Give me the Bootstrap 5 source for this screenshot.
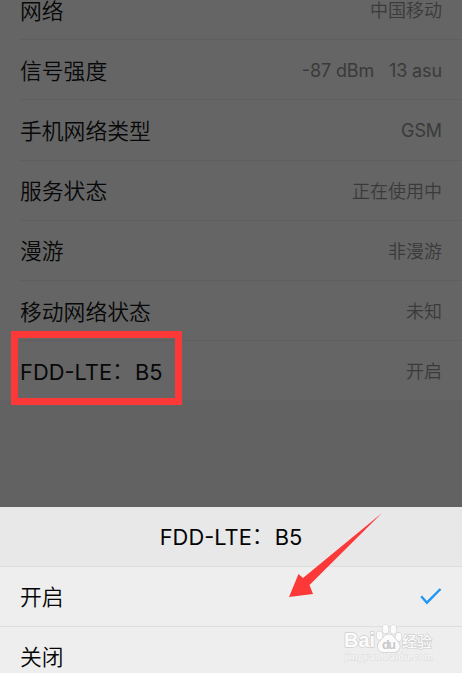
<!DOCTYPE html>
<html lang="zh-CN">
<head>
<meta charset="utf-8">
<meta name="viewport" content="width=device-width, initial-scale=1">
<title>FDD-LTE：B5</title>
<link href="https://cdn.jsdelivr.net/npm/bootstrap@5.3.0/dist/css/bootstrap.min.css" rel="stylesheet">
<style>
html, body { height: 100%; overflow: hidden; }
body { background: #626262; color: #080808; font-family: Inter, "Noto Sans CJK SC", sans-serif; font-weight: 350; font-size: 21.8px; line-height: 30px; }
.screen { height: 673px; }
.settings { height: 507px; overflow: hidden; }
.settings-list { margin-top: -21px; background: #656565; padding-left: 20px; }
.setting { height: 60.2px; padding: 2px 20px 0 0; }
.setting:first-child { padding-top: 3px; }
.setting + .setting { border-top: 1px solid #5f5f5f; }
.value { font-size: 18px; color: #3a3a3a; white-space: pre; padding-top: 1px; font-feature-settings: "case"; }
.value-latin { font-weight: 400; letter-spacing: -.12px; padding-top: 0; }
.sheet { background: #eee; height: 166px; color: #040404; overflow: hidden; }
.sheet-head { height: 60px; padding-top: 1px; background: #e8e8e8; border-bottom: 1px solid #dedede; }
.option { height: 60px; padding: 0 20px; border-bottom: 1px solid #dedede; }
.latin { font-weight: 400; letter-spacing: .05px; font-feature-settings: "case"; }
.colon { font-weight: 350; line-height: 1; vertical-align: 2px; margin-right: 1px; }
.highlight { left: 11px; top: 331px; width: 171px; height: 74px; border: 7px solid #fc3838; }
.pointer { left: 288px; top: 512px; }
.watermark { left: 340px; top: 614px; }
</style>
</head>
<body>
<div class="screen position-relative overflow-hidden">
  <main class="settings">
    <div class="settings-list">
      <div class="setting d-flex align-items-center justify-content-between"><span>网络</span><span class="value">中国移动</span></div>
      <div class="setting d-flex align-items-center justify-content-between"><span>信号强度</span><span class="value value-latin">-87 dBm   13 asu</span></div>
      <div class="setting d-flex align-items-center justify-content-between"><span>手机网络类型</span><span class="value value-latin">GSM</span></div>
      <div class="setting d-flex align-items-center justify-content-between"><span>服务状态</span><span class="value">正在使用中</span></div>
      <div class="setting d-flex align-items-center justify-content-between"><span>漫游</span><span class="value">非漫游</span></div>
      <div class="setting d-flex align-items-center justify-content-between"><span>移动网络状态</span><span class="value">未知</span></div>
      <div class="setting d-flex align-items-center justify-content-between"><span class="latin">FDD-LTE<span class="colon">：</span>B5</span><span class="value">开启</span></div>
    </div>
  </main>
  <section class="sheet">
    <div class="sheet-head d-flex align-items-center justify-content-center"><span class="latin">FDD-LTE<span class="colon">：</span>B5</span></div>
    <div class="option d-flex align-items-center justify-content-between">
      <span>开启</span>
      <svg width="22" height="18" viewBox="0 0 22 18" fill="none" stroke="#2196f3" stroke-width="2.4"><path d="M1.200 8.200 6.900 14.700 20.500 1"/></svg>
    </div>
    <div class="option d-flex align-items-center"><span>关闭</span></div>
  </section>
  <div class="highlight position-absolute"></div>
  <svg class="pointer position-absolute" width="96" height="88" viewBox="0 0 96 88"><path fill="#fc3838" d="M94 1 21.500 73 25 82 1 85 10.500 62 15 66Z"/></svg>
  <svg class="watermark position-absolute" width="100" height="52" viewBox="0 0 100 52">
    <g fill="#fbfbfb" stroke="#d0d0d0" stroke-width="1.4" paint-order="stroke" stroke-linejoin="round">
      <text x="4" y="33" font-family="Liberation Sans, sans-serif" font-weight="700" font-size="19.5" textLength="31" lengthAdjust="spacingAndGlyphs">Bai</text>
      <ellipse cx="39.500" cy="21.500" rx="3" ry="4.200"/><ellipse cx="45.500" cy="15" rx="3" ry="4.400"/><ellipse cx="53.500" cy="15.500" rx="3" ry="4.400"/><ellipse cx="58.500" cy="23" rx="3" ry="4.200"/>
      <path d="M49 20.500C44.500 20.500 43 24 40 27.500C36 31 37.500 38 43 38H54C60 38 61.500 31 57.500 27.500C54 24 53.500 20.500 49 20.500Z"/>
      <text x="62" y="32.500" font-family="Noto Sans CJK SC, sans-serif" font-weight="500" font-size="15">经验</text>
      <text x="5" y="46" font-family="Liberation Serif, serif" font-weight="400" font-size="11" stroke="#dcdcdc" stroke-width="1" textLength="88">jingyan.baidu.com</text>
    </g>
    <text x="42" y="34.500" fill="#c8c8c8" font-family="Liberation Sans, sans-serif" font-weight="700" font-size="12.5" textLength="14">du</text>
  </svg>
</div>
<script src="https://cdn.jsdelivr.net/npm/bootstrap@5.3.0/dist/js/bootstrap.bundle.min.js"></script>
</body>
</html>
